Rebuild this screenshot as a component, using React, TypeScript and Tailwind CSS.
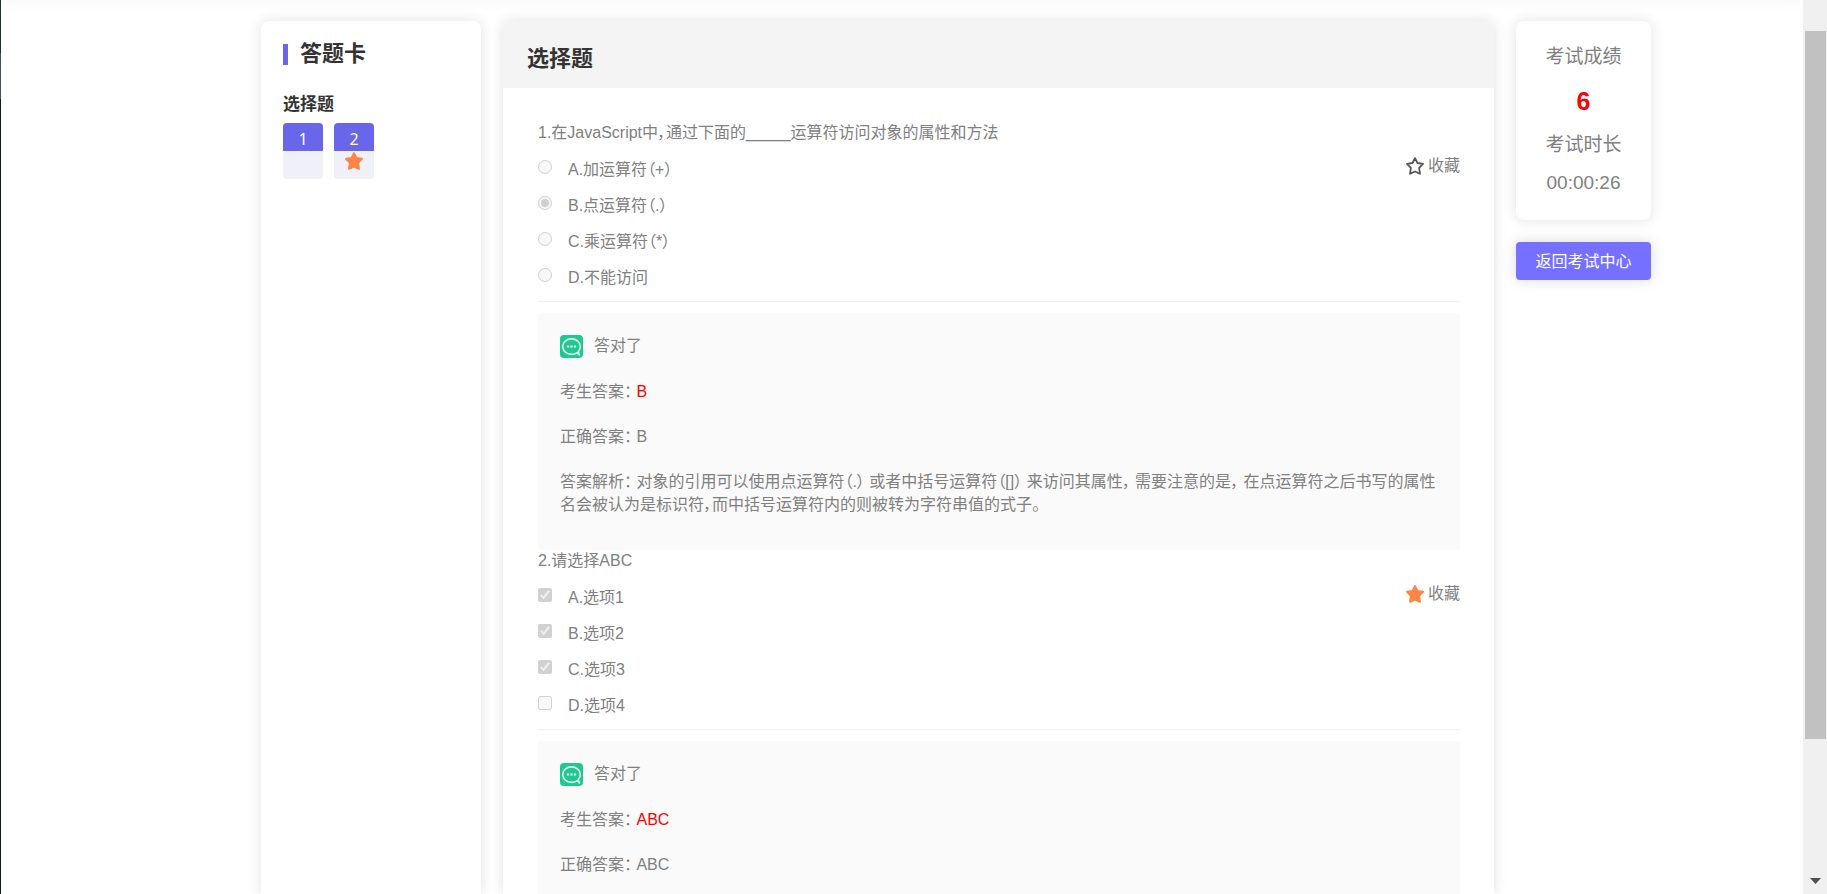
import { useState } from "react";

/** Uma alternativa da questão, já com o estado marcado pelo aluno. */
type Choice = {
  key: string;
  text: string;
  checked: boolean;
};

type Question = {
  id: number;
  type: "radio" | "checkbox";
  title: string;
  choices: Choice[];
  studentAnswer: string;
  rightAnswer: string;
  analysis?: string;
};

const questions: Question[] = [
  {
    id: 1,
    type: "radio",
    title: "在JavaScript中，通过下面的_____运算符访问对象的属性和方法",
    choices: [
      { key: "A", text: "加运算符（+）", checked: false },
      { key: "B", text: "点运算符（.）", checked: true },
      { key: "C", text: "乘运算符（*）", checked: false },
      { key: "D", text: "不能访问", checked: false },
    ],
    studentAnswer: "B",
    rightAnswer: "B",
    analysis:
      "对象的引用可以使用点运算符（.） 或者中括号运算符（[]） 来访问其属性， 需要注意的是， 在点运算符之后书写的属性名会被认为是标识符，而中括号运算符内的则被转为字符串值的式子。",
  },
  {
    id: 2,
    type: "checkbox",
    title: "请选择ABC",
    choices: [
      { key: "A", text: "选项1", checked: true },
      { key: "B", text: "选项2", checked: true },
      { key: "C", text: "选项3", checked: true },
      { key: "D", text: "选项4", checked: false },
    ],
    studentAnswer: "ABC",
    rightAnswer: "ABC",
  },
];

function StarIcon({ filled }: { filled: boolean }) {
  return (
    <svg viewBox="0 0 18 18" className="size-[18px] shrink-0" aria-hidden="true">
      <path
        d="M9 1.1 L11.5 6 L17 6.8 L13.1 10.8 L14 16.8 L9 14.5 L4 16.8 L4.9 10.8 L1 6.8 L6.5 6 Z"
        fill={filled ? "#ff8547" : "none"}
        stroke={filled ? "#ff8547" : "#555555"}
        strokeWidth={filled ? 2 : 1.8}
        strokeLinejoin="round"
      />
    </svg>
  );
}

function BubbleIcon() {
  return (
    <svg viewBox="0 0 23 23" className="size-[23px] shrink-0" aria-hidden="true">
      <rect width="23" height="23" rx="4" fill="#20c78f" />
      <path
        d="M17.2 17.6 C15.7 18.7 13.7 19.4 11.5 19.4 C6.5 19.4 2.7 15.9 2.7 11.6 C2.7 7.3 6.5 3.9 11.5 3.9 C16.5 3.9 20.3 7.3 20.3 11.6 C20.3 13.5 19.6 15.2 18.4 16.5 L19.4 20 Z"
        fill="none"
        stroke="#d8f7ea"
        strokeWidth="1.6"
        strokeLinejoin="round"
      />
      <circle cx="8" cy="11.5" r="1.2" fill="#d8f7ea" />
      <circle cx="11.5" cy="11.5" r="1.2" fill="#d8f7ea" />
      <circle cx="15" cy="11.5" r="1.2" fill="#d8f7ea" />
    </svg>
  );
}

/** Cartão de respostas: um quadradinho por questão, com estrela se favoritada. */
function AnswerCard({ favorites }: { favorites: number[] }) {
  return (
    <aside className="w-[220px] shrink-0 rounded-t-lg bg-white px-[22px] pt-[22px] shadow-[0_0_14px_rgba(0,0,0,0.12)]">
      <div className="flex items-center">
        <span className="h-[21px] w-[5px] bg-[#6966e9]" />
        <h2 className="ml-3 text-[22px] leading-[22px] font-bold text-[#333]">答题卡</h2>
      </div>
      <h3 className="mt-7 text-[17px] leading-6 font-bold text-[#333]">选择题</h3>
      <div className="mt-[6px] flex gap-[11px]">
        {questions.map((question) => (
          <button
            key={question.id}
            type="button"
            className="flex h-14 w-10 flex-col overflow-hidden rounded bg-[#f0f1f8] font-['Noto_Sans',sans-serif] text-base text-white"
          >
            <span className="h-7 w-full bg-[#6966e9] leading-8">{question.id}</span>
            <span className="flex w-full justify-center pt-px">
              {favorites.includes(question.id) && <StarIcon filled />}
            </span>
          </button>
        ))}
      </div>
    </aside>
  );
}

type QuestionProps = {
  question: Question;
  favorite: boolean;
  onToggle: () => void;
};

function QuestionItem({ question, favorite, onToggle }: QuestionProps) {
  return (
    <section>
      <p className="leading-[21px]">{`${question.id}.${question.title}`}</p>

      {/* Alternativas e botão de favoritar */}
      <div className="mt-[7px] flex items-start justify-between border-b border-[#f2f2f2] pb-[7px]">
        <div>
          {question.choices.map((choice) => (
            <label key={choice.key} className="flex h-9 items-start leading-[39px]">
              <input
                type={question.type}
                name={`question-${question.id}`}
                defaultChecked={choice.checked}
                disabled
                className="mt-[10px] mr-4 size-[14px]"
              />
              {`${choice.key}.${choice.text}`}
            </label>
          ))}
        </div>
        <button type="button" onClick={onToggle} className="flex h-[31px] items-center gap-1">
          <StarIcon filled={favorite} />
          收藏
        </button>
      </div>

      {/* Correção */}
      <div className="mt-[11px] space-y-[22px] rounded bg-[#fafafa] px-[22px] pt-[22px] pb-[34px]">
        <div className="flex h-[23px] gap-[11px] leading-[21px]">
          <BubbleIcon />
          <span>答对了</span>
        </div>
        <p>
          考生答案： <span className="text-[#ff0000]">{question.studentAnswer}</span>
        </p>
        <p>{`正确答案： ${question.rightAnswer}`}</p>
        {question.analysis && <p>{`答案解析： ${question.analysis}`}</p>}
      </div>
    </section>
  );
}

function ScorePanel() {
  return (
    <aside className="w-[135px] shrink-0">
      <div className="rounded-lg bg-white pt-[17px] pb-[18px] text-center text-[19px] leading-[38px] shadow-[0_0_14px_rgba(0,0,0,0.12)]">
        <p>考试成绩</p>
        <p className="text-[25px] leading-[50px] font-bold text-[#ff0000]">6</p>
        <p>考试时长</p>
        <p>00:00:26</p>
      </div>
      <button
        type="button"
        className="mt-[22px] h-[38px] w-full rounded bg-[#7570ff] text-white shadow-[0_0_14px_rgba(0,0,0,0.15)]"
      >
        返回考试中心
      </button>
    </aside>
  );
}

/** Barra de rolagem desenhada na lateral direita. */
function ScrollTrack() {
  return (
    <div className="flex w-6 shrink-0 flex-col items-center justify-between bg-[#f0f0f0] pt-[31px] pb-[10px]">
      <div className="h-[83%] w-[21px] bg-[#c1c1c1]" />
      <svg viewBox="0 0 11 6" className="h-[6px] w-[11px]" aria-hidden="true">
        <path d="M0 0 H11 L5.5 6 Z" fill="#505050" />
      </svg>
    </div>
  );
}

export default function App() {
  const [favorites, setFavorites] = useState<number[]>([2]);

  function toggleFavorite(id: number) {
    setFavorites((prev) =>
      prev.includes(id) ? prev.filter((item) => item !== id) : [...prev, id]
    );
  }

  return (
    <div
      lang="zh-CN"
      className="flex h-screen overflow-hidden bg-white font-['Liberation_Sans','Noto_Sans_CJK_SC',sans-serif] text-base leading-[23px] text-[#808080] [font-feature-settings:'palt']"
    >
      {/* Borda escura da janela */}
      <div className="flex w-px shrink-0 flex-col bg-[#0a1a2b]">
        <div className="h-[53px] bg-[#22302b]" />
        <div className="h-[46px] bg-[#41505f]" />
      </div>

      <div className="flex min-w-0 flex-1 flex-col">
        {/* Sombra do cabeçalho fixo */}
        <div className="h-0 shadow-[0_0_12px_1px_rgba(0,0,0,0.12)]" />

        <div className="flex min-h-0 flex-1 gap-[22px] pt-[21px] pr-[152px] pl-[260px]">
          <AnswerCard favorites={favorites} />

          <main className="min-w-0 flex-1 rounded-t-lg bg-white shadow-[0_0_14px_rgba(0,0,0,0.12)]">
            <h2 className="rounded-t-lg bg-[#f4f4f4] px-6 pt-2 text-[22px] leading-[59px] font-bold text-[#333]">
              选择题
            </h2>
            <div className="pt-[34px] pr-[34px] pl-[35px]">
              {questions.map((question) => (
                <QuestionItem
                  key={question.id}
                  question={question}
                  favorite={favorites.includes(question.id)}
                  onToggle={() => toggleFavorite(question.id)}
                />
              ))}
            </div>
          </main>

          <ScorePanel />
        </div>
      </div>
      <ScrollTrack />
    </div>
  );
}
